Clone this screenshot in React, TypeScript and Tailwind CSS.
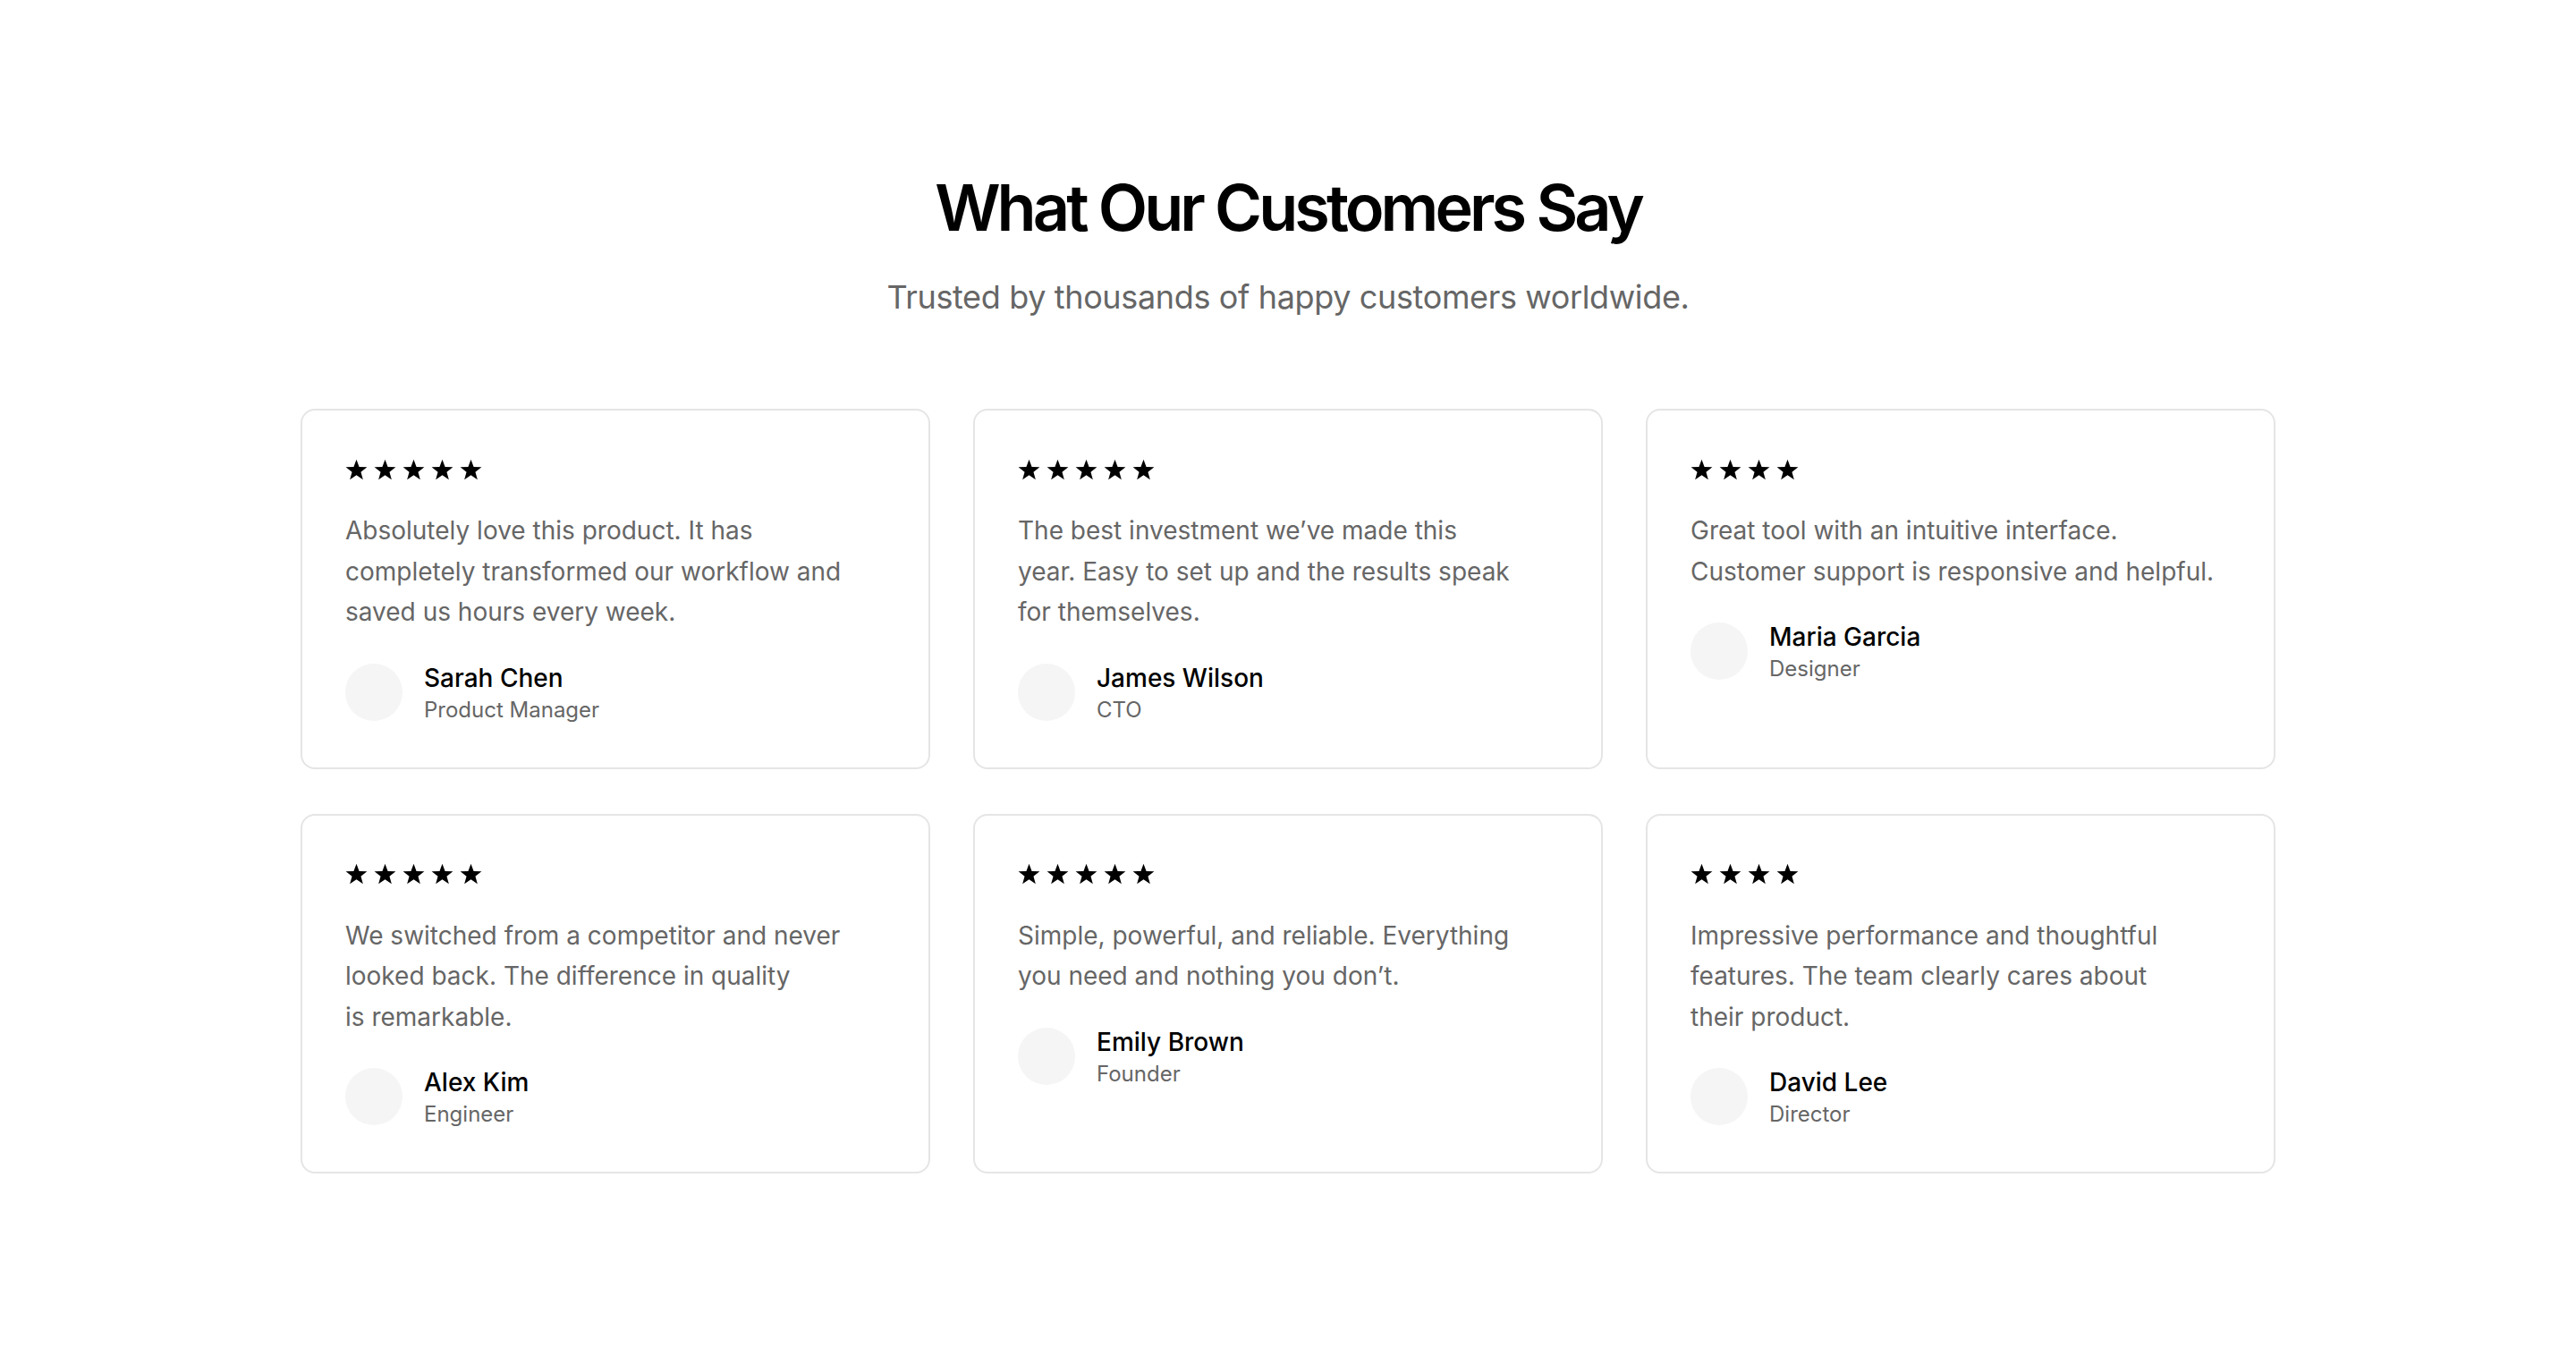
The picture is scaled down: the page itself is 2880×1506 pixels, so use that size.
import React from "react";

type Review = {
  rating: number;
  lines: string[];
  name: string;
  role: string;
};

const reviews: Review[] = [
  {
    rating: 5,
    lines: ["Absolutely love this product. It has", "completely transformed our workflow and", "saved us hours every week."],
    name: "Sarah Chen",
    role: "Product Manager",
  },
  {
    rating: 5,
    lines: ["The best investment we\u2019ve made this", "year. Easy to set up and the results speak", "for themselves."],
    name: "James Wilson",
    role: "CTO",
  },
  {
    rating: 4,
    lines: ["Great tool with an intuitive interface.", "Customer support is responsive and helpful."],
    name: "Maria Garcia",
    role: "Designer",
  },
  {
    rating: 5,
    lines: ["We switched from a competitor and never", "looked back. The difference in quality", "is remarkable."],
    name: "Alex Kim",
    role: "Engineer",
  },
  {
    rating: 5,
    lines: ["Simple, powerful, and reliable. Everything", "you need and nothing you don\u2019t."],
    name: "Emily Brown",
    role: "Founder",
  },
  {
    rating: 4,
    lines: ["Impressive performance and thoughtful", "features. The team clearly cares about", "their product."],
    name: "David Lee",
    role: "Director",
  },
];

function Star() {
  return (
    <svg viewBox="0 0 24 24" className="w-[25px] h-[25px]" fill="currentColor">
      <polygon points="12,0.6 14.94,8.55 23.41,8.89 16.76,14.15 19.05,22.31 12,17.6 4.95,22.31 7.24,14.15 0.59,8.89 9.06,8.55" />
    </svg>
  );
}

function ReviewCard({ r }: { r: Review }) {
  return (
    <div className="bg-white border-2 border-[#e5e5e5] rounded-[16px] p-[48px]">
      <div className="flex items-center gap-[7px] h-[36px] mb-[28px] text-black">
        {Array.from({ length: r.rating }).map((_, i) => (
          <Star key={i} />
        ))}
      </div>
      <p className="text-[28px] leading-[45.5px] text-[#666666]">
        {r.lines.map((l, i) => (
          <React.Fragment key={i}>
            {l}
            {i < r.lines.length - 1 && <br />}
          </React.Fragment>
        ))}
      </p>
      <div className="mt-[30px] flex items-center gap-[24px]">
        <div className="w-[64px] h-[64px] rounded-full bg-[#f5f5f5] shrink-0" />
        <div>
          <div className="text-[28px] leading-[40px] font-medium text-black">{r.name}</div>
          <div className="text-[24px] leading-[32px] text-[#666666]">{r.role}</div>
        </div>
      </div>
    </div>
  );
}

export default function App() {
  return (
    <div className="min-h-screen bg-white font-['Inter',sans-serif]">
      <section className="mx-auto max-w-[2304px] px-[48px] pt-[196px] pb-[192px]">
        <h1 className="text-center text-[72px] leading-[72px] font-semibold tracking-[-0.055em] text-black">
          What Our Customers Say
        </h1>
        <p className="mt-[36px] text-center text-[36px] leading-[56px] tracking-[-0.01em] text-[#666666]">
          Trusted by thousands of happy customers worldwide.
        </p>
        <div className="mt-[97px] grid grid-cols-3 gap-x-[48px] gap-y-[50px]">
          {reviews.map((r) => (
            <ReviewCard key={r.name} r={r} />
          ))}
        </div>
      </section>
    </div>
  );
}
